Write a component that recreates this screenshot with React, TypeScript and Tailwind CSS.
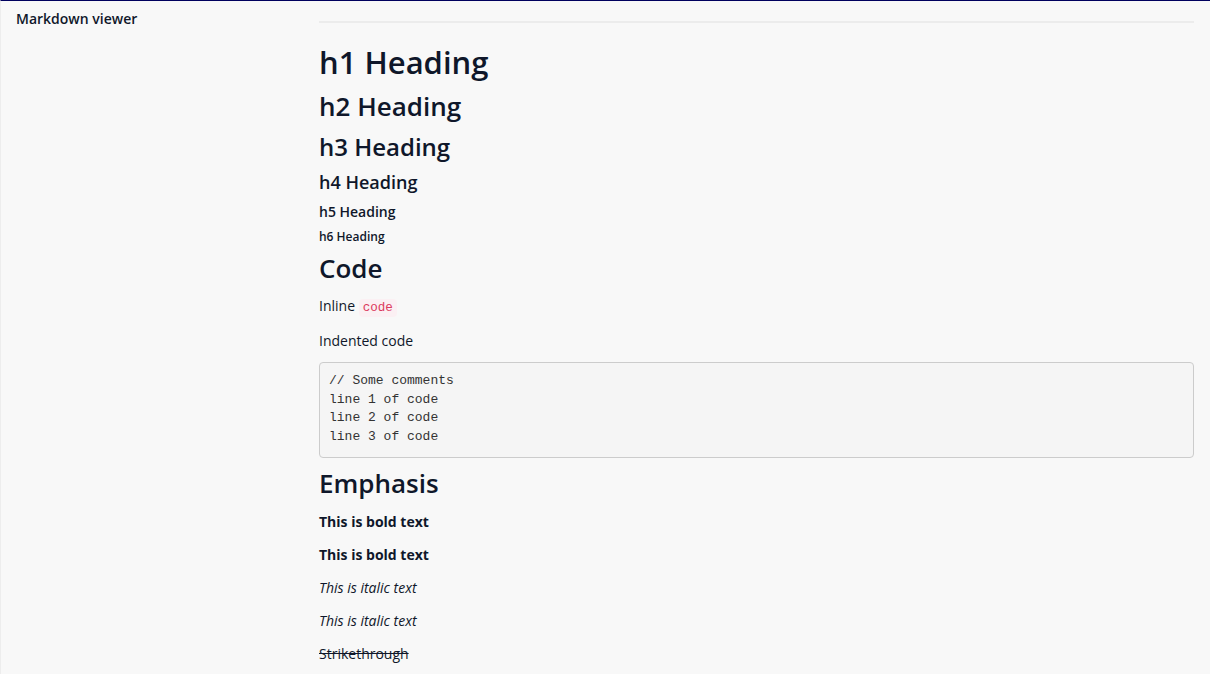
import React from 'react';

const codeLines = ['// Some comments', 'line 1 of code', 'line 2 of code', 'line 3 of code'];

function Sidebar() {
  return (
    <aside className="pl-[15px] pt-[8px]">
      <div className="text-[14px] leading-[20px] font-semibold text-[#0f172a]">Markdown viewer</div>
    </aside>
  );
}

function Content() {
  return (
    <main className="px-4 pb-10 text-[#0f172a]">
      <hr className="mt-[20px] border-0 h-[2px] bg-[#ececec]" />

      <h1 className="mt-[21px] text-[31px] leading-[36px] font-semibold">h1 Heading</h1>
      <h2 className="mt-[10px] text-[26px] leading-[32px] font-semibold">h2 Heading</h2>
      <h3 className="mt-[10px] text-[24px] leading-[30px] font-semibold">h3 Heading</h3>
      <h4 className="mt-[8px] text-[18px] leading-[24px] font-semibold">h4 Heading</h4>
      <h5 className="mt-[8px] text-[14px] leading-[20px] font-semibold">h5 Heading</h5>
      <h6 className="mt-[6px] text-[12px] leading-[18px] font-semibold">h6 Heading</h6>

      <h2 className="mt-[6px] text-[26px] leading-[32px] font-semibold">Code</h2>
      <p className="mt-[12px] text-[14px] leading-[20px]">
        Inline{' '}
        <code className="px-[4px] py-[2px] rounded-[4px] bg-[#fbf0f3] text-[#dc3a5e] text-[12.6px] font-['Liberation_Mono',monospace]">
          code
        </code>
      </p>
      <p className="mt-[13px] text-[14px] leading-[20px]">Indented code</p>
      <pre className="mt-[11px] pl-[9px] pr-[10px] pt-[9px] pb-[10px] rounded-[4px] border border-[#cccccc] bg-[#f5f5f5] text-[#333333] text-[13px] leading-[18.7px] font-['Liberation_Mono',monospace]">
        {codeLines.join('\n')}
      </pre>

      <h2 className="mt-[9px] text-[26px] leading-[32px] font-semibold">Emphasis</h2>
      <div className="mt-[13px] flex flex-col gap-[13px] text-[14px] leading-[20px]">
        <p className="font-bold">This is bold text</p>
        <p className="font-bold">This is bold text</p>
        <p className="italic">This is italic text</p>
        <p className="italic">This is italic text</p>
        <p className="line-through">Strikethrough</p>
      </div>
    </main>
  );
}

export default function App() {
  return (
    <div className="min-h-[674px] bg-[#f8f8f8] border-t border-[#00005e] border-l border-l-[#ededed] font-['Open_Sans',sans-serif] grid grid-cols-[302px_1fr]">
      <Sidebar />
      <Content />
    </div>
  );
}
